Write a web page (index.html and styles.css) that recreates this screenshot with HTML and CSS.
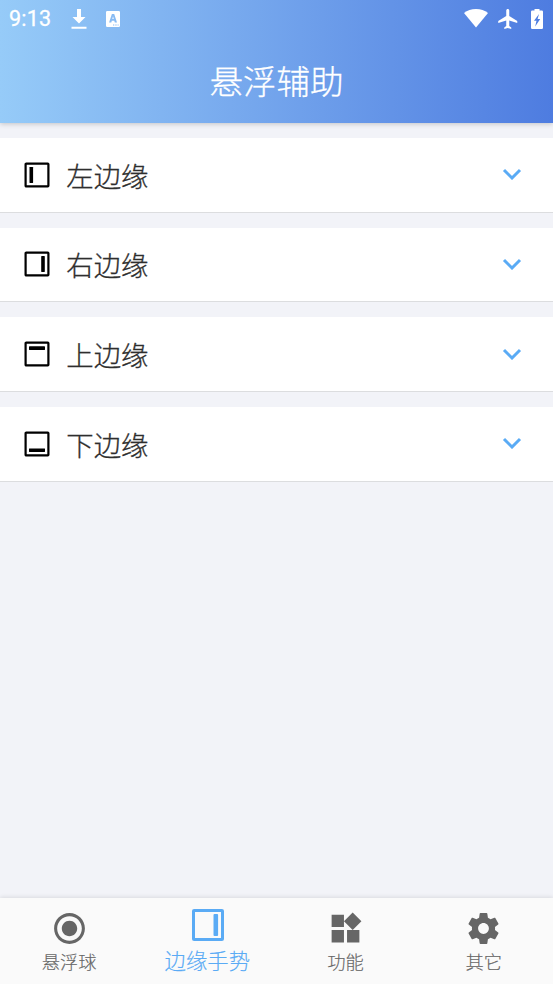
FILE: index.html
```html
<!DOCTYPE html>
<html lang="zh-CN">
<head>
<meta charset="utf-8">
<title>悬浮辅助</title>
<link rel="stylesheet" href="styles.css">
</head>
<body>
<header class="header">
  <div class="status">
    <span class="time">9:13</span>
    <svg class="download" viewBox="0 0 16 22"><path d="M6 1h4v8h4.500L8 15.500 1.500 9H6zM0.500 18.700h15v2H.5z"/></svg>
    <svg class="ime" viewBox="0 0 14 16"><path fill-rule="evenodd" d="M1.300 0h11.400Q14 0 14 1.300v13.400Q14 16 12.700 16H1.300Q0 16 0 14.700V1.300Q0 0 1.300 0zM5.900 3 3.100 11.500h2.200l.5-1.700h2.500l.5 1.700H11L8.200 3zm1.100 2.300.8 2.700H6.300zM7 13.500h1.300v1H7zm2.300 0h1.300v1H9.300zm2.300 0h1v1h-1z"/></svg>
    <span class="spacer"></span>
    <svg class="wifi" viewBox="0 0 24 19"><path d="M12 18.500 0 4Q5 0 12 0t12 4z"/></svg>
    <svg class="plane" viewBox="2 2 19.500 20"><path d="M21 16v-2l-8-5V3.500c0-.83-.67-1.500-1.500-1.500S10 2.670 10 3.500V9l-8 5v2l8-2.500V19l-2 1.500V22l3.500-1 3.500 1v-1.500L13 19v-5.500l8 2.500z"/></svg>
    <svg class="battery" viewBox="0 0 12 20"><path fill-rule="evenodd" d="M3.500 0h5v1.500h2.300Q12 1.500 12 2.700v16.100Q12 20 10.800 20H1.200Q0 20 0 18.800V2.700Q0 1.500 1.200 1.500h2.300zM8 5 3 11.700h2.500L4.200 17.500 9.200 10H6.600z"/></svg>
  </div>
  <h1 class="title">悬浮辅助</h1>
</header>
<main class="list">
  <section class="row">
    <svg class="edge" viewBox="0 0 26 26"><rect class="frame" x="1.600" y="1.600" width="22.800" height="22.800" rx=".6"/><rect x="5.500" y="5" width="3.600" height="16" rx=".4"/></svg>
    <span class="name">左边缘</span>
    <svg class="chevron" viewBox="0 0 20 12"><path d="m2 2 8 8 8-8"/></svg>
  </section>
  <section class="row">
    <svg class="edge" viewBox="0 0 26 26"><rect class="frame" x="1.600" y="1.600" width="22.800" height="22.800" rx=".6"/><rect x="17.200" y="5" width="3.600" height="16" rx=".4"/></svg>
    <span class="name">右边缘</span>
    <svg class="chevron" viewBox="0 0 20 12"><path d="m2 2 8 8 8-8"/></svg>
  </section>
  <section class="row">
    <svg class="edge" viewBox="0 0 26 26"><rect class="frame" x="1.600" y="1.600" width="22.800" height="22.800" rx=".6"/><rect x="5" y="5.300" width="16" height="3.600" rx=".4"/></svg>
    <span class="name">上边缘</span>
    <svg class="chevron" viewBox="0 0 20 12"><path d="m2 2 8 8 8-8"/></svg>
  </section>
  <section class="row">
    <svg class="edge" viewBox="0 0 26 26"><rect class="frame" x="1.600" y="1.600" width="22.800" height="22.800" rx=".6"/><rect x="5" y="17.400" width="16" height="3.600" rx=".4"/></svg>
    <span class="name">下边缘</span>
    <svg class="chevron" viewBox="0 0 20 12"><path d="m2 2 8 8 8-8"/></svg>
  </section>
</main>
<nav class="nav">
  <a class="tab">
    <svg class="tab-icon" viewBox="0 0 24 24"><path d="M12 7c-2.760 0-5 2.240-5 5s2.240 5 5 5 5-2.240 5-5-2.240-5-5-5zm0-5C6.480 2 2 6.480 2 12s4.480 10 10 10 10-4.480 10-10S17.520 2 12 2zm0 18c-4.420 0-8-3.580-8-8s3.580-8 8-8 8 3.580 8 8-3.580 8-8 8z"/></svg>
    <span>悬浮球</span>
  </a>
  <a class="tab active">
    <svg class="tab-icon" viewBox="0 0 34 34"><rect class="frame" x="2.500" y="2.500" width="29" height="29" rx=".6"/><rect x="22.500" y="6" width="4.600" height="22" rx="1"/></svg>
    <span>边缘手势</span>
  </a>
  <a class="tab">
    <svg class="tab-icon" viewBox="0 0 24 24"><path d="M13 13v8h8v-8h-8zM3 21h8v-8H3v8zM3 3v8h8V3H3zm13.660-1.310L11 7.340 16.660 13l5.660-5.660-5.660-5.650z"/></svg>
    <span>功能</span>
  </a>
  <a class="tab">
    <svg class="tab-icon" viewBox="0 0 24 24"><path d="M19.430 12.980c.04-.32.07-.64.07-.98s-.03-.66-.07-.98l2.110-1.650c.19-.15.24-.42.12-.64l-2-3.460c-.12-.22-.39-.3-.61-.22l-2.490 1c-.52-.4-1.080-.73-1.690-.98l-.38-2.650C14.460 2.180 14.250 2 14 2h-4c-.25 0-.46.18-.49.42l-.38 2.650c-.61.25-1.170.59-1.690.98l-2.490-1c-.23-.09-.49 0-.61.22l-2 3.460c-.13.22-.07.49.12.64l2.110 1.650c-.04.32-.07.65-.07.98s.03.66.07.98l-2.110 1.650c-.19.15-.24.42-.12.64l2 3.460c.12.22.39.3.61.22l2.490-1c.52.4 1.080.73 1.690.98l.38 2.650c.03.24.24.42.49.42h4c.25 0 .46-.18.49-.42l.38-2.650c.61-.25 1.170-.59 1.690-.98l2.490 1c.23.09.49 0 .61-.22l2-3.460c.12-.22.07-.49-.12-.64l-2.110-1.650zM12 15.500c-1.930 0-3.500-1.570-3.500-3.500s1.570-3.500 3.500-3.500 3.500 1.570 3.500 3.500-1.570 3.500-3.500 3.500z"/></svg>
    <span>其它</span>
  </a>
</nav>
</body>
</html>
```
FILE: styles.css
```css
* { box-sizing: border-box; }
body {
  margin: 0;
  height: 984px;
  display: flex;
  flex-direction: column;
  background: #f2f3f8;
  font-family: "Noto Sans CJK SC", sans-serif;
  font-weight: 300;
  -webkit-text-stroke: .3px currentColor;
  overflow: hidden;
}
svg { display: block; flex: none; fill: currentColor; }
.header {
  height: 123px;
  flex: none;
  color: #fff;
  background: linear-gradient(90deg, #96cbf8, #4e7ce0);
  box-shadow: 0 1px 5px rgba(0, 0, 0, .2);
}
.status {
  height: 37px;
  display: flex;
  align-items: center;
  padding: 0 10px 0 9px;
}
.time { width: 62px; font: 400 21.500px/38px Roboto, sans-serif; letter-spacing: .2px; }
.download { width: 16px; height: 22px; margin-right: 19px; }
.ime { width: 14px; height: 16px; }
.spacer { flex: 1; }
.wifi { width: 24px; height: 19px; margin-right: 10px; }
.plane { width: 20px; height: 20px; margin-right: 13px; }
.battery { width: 12px; height: 20px; }
.title {
  margin: 0;
  height: 86px;
  text-align: center;
  font-size: 33.500px;
  line-height: 85px;
  font-weight: 300;
}
.list { flex: 1; display: flex; flex-direction: column; gap: 15px; padding-top: 15px; }
.row {
  height: 74.660px;
  display: flex;
  align-items: center;
  padding: 0 31.500px 0 24.300px;
  background: #fff;
  border-bottom: 1px solid #dcdddf;
}
.edge { width: 26px; height: 26px; color: #000; }
.frame { fill: none; stroke: currentColor; stroke-width: 2.200; }
.name { flex: 1; margin-left: 16px; font-size: 27.400px; line-height: 40px; color: #2e2e2e; }
.chevron { width: 20px; height: 12px; margin-bottom: 1px; fill: none; stroke: #5aabf5; stroke-width: 3; }
.nav {
  height: 86px;
  flex: none;
  display: flex;
  background: #fafafa;
  box-shadow: 0 -1px 4px rgba(0, 0, 0, .1);
}
.tab {
  flex: 1;
  display: flex;
  flex-direction: column;
  align-items: center;
  padding-top: 12px;
  color: #666;
  font-size: 18.300px;
  line-height: 28px;
  -webkit-text-stroke-width: .15px;
}
.tab-icon { width: 37px; height: 37px; }
.active { padding-top: 10px; color: #5aabf5; font-size: 21.400px; line-height: 36px; }
.active .tab-icon { width: 34px; height: 34px; margin-left: 1px; }
.active .frame { stroke-width: 3; }
```
